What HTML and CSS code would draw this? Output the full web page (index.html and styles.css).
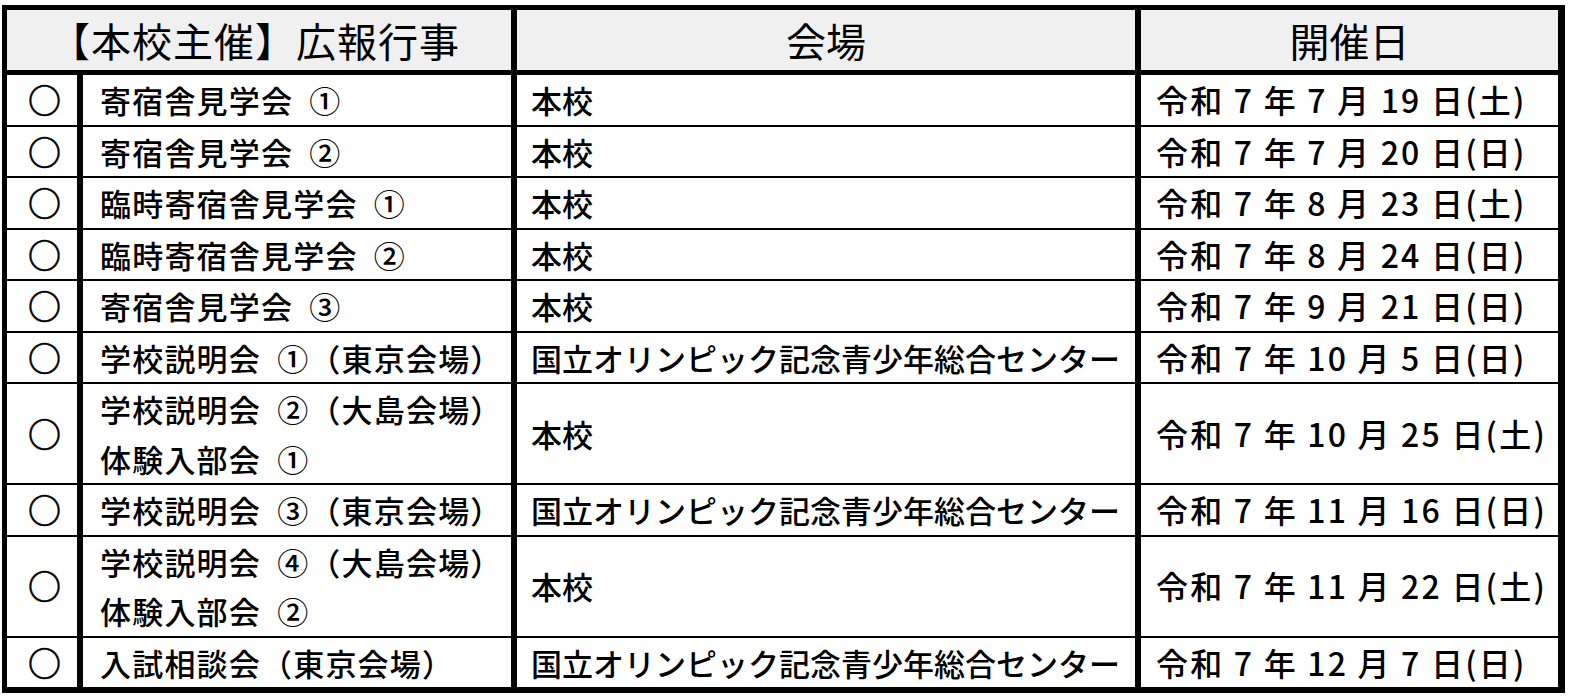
FILE: index.html
```html
<!DOCTYPE html>
<html lang="ja">
<head>
<meta charset="utf-8">
<title>本校主催 広報行事</title>
<link rel="stylesheet" href="styles.css">
</head>
<body>
<div class="sheet">
  <div class="schedule">
    <div class="hd hd-event">【本校主催】広報行事</div>
    <div class="hd">会場</div>
    <div class="hd">開催日</div>

    <div class="mark">○</div><div class="event">寄宿舎見学会 ①</div><div class="venue">本校</div><div class="date">令和 7 年 7 月 19 日(土)</div>
    <div class="mark">○</div><div class="event">寄宿舎見学会 ②</div><div class="venue">本校</div><div class="date">令和 7 年 7 月 20 日(日)</div>
    <div class="mark">○</div><div class="event">臨時寄宿舎見学会 ①</div><div class="venue">本校</div><div class="date">令和 7 年 8 月 23 日(土)</div>
    <div class="mark">○</div><div class="event">臨時寄宿舎見学会 ②</div><div class="venue">本校</div><div class="date">令和 7 年 8 月 24 日(日)</div>
    <div class="mark">○</div><div class="event">寄宿舎見学会 ③</div><div class="venue">本校</div><div class="date">令和 7 年 9 月 21 日(日)</div>
    <div class="mark">○</div><div class="event">学校説明会 ①（東京会場）</div><div class="venue">国立オリンピック記念青少年総合センター</div><div class="date">令和 7 年 10 月 5 日(日)</div>
    <div class="mark">○</div><div class="event"><span>学校説明会 ②（大島会場）<br>体験入部会 ①</span></div><div class="venue">本校</div><div class="date">令和 7 年 10 月 25 日(土)</div>
    <div class="mark">○</div><div class="event">学校説明会 ③（東京会場）</div><div class="venue">国立オリンピック記念青少年総合センター</div><div class="date">令和 7 年 11 月 16 日(日)</div>
    <div class="mark">○</div><div class="event"><span>学校説明会 ④（大島会場）<br>体験入部会 ②</span></div><div class="venue">本校</div><div class="date">令和 7 年 11 月 22 日(土)</div>
    <div class="mark">○</div><div class="event">入試相談会（東京会場）</div><div class="venue">国立オリンピック記念青少年総合センター</div><div class="date">令和 7 年 12 月 7 日(日)</div>
  </div>
</div>
</body>
</html>
```

FILE: styles.css
```css
html, body {
  margin: 0;
  background: #ffffff;
}

body {
  font-family: "Noto Sans CJK JP", "Noto Sans", sans-serif;
  color: #000000;
}

.sheet {
  padding: 5px 0 0 2px;
}

.schedule {
  display: grid;
  box-sizing: border-box;
  width: 1563px;
  grid-template-columns: 70px 428px 618px 417px;
  column-gap: 6px;
  row-gap: 2px;
  background: #000000;
  padding: 5px 7px 6px 5px;
}

.hd {
  background: #f0f0f0;
  height: 60px;
  margin-bottom: 3px;
  display: flex;
  align-items: center;
  justify-content: center;
  font-size: 40px;
  font-weight: 400;
  line-height: 1;
}

.hd-event {
  grid-column: span 2;
  letter-spacing: 1px;
  padding-right: 8px;
}

.mark,
.event,
.venue,
.date {
  background: #ffffff;
  display: flex;
  align-items: center;
  font-size: 31px;
  font-weight: 500;
  line-height: 49.5px;
  white-space: nowrap;
}

.mark {
  justify-content: center;
  padding-left: 5px;
  font-size: 33px;
  font-weight: 700;
  -webkit-text-stroke: 0.6px #000000;
}

.event {
  padding-left: 17px;
  letter-spacing: 1.2px;
  word-spacing: 8px;
}

.venue {
  padding-left: 14px;
}

.date {
  padding-left: 15px;
  font-size: 32px;
  letter-spacing: 2.2px;
}
```
